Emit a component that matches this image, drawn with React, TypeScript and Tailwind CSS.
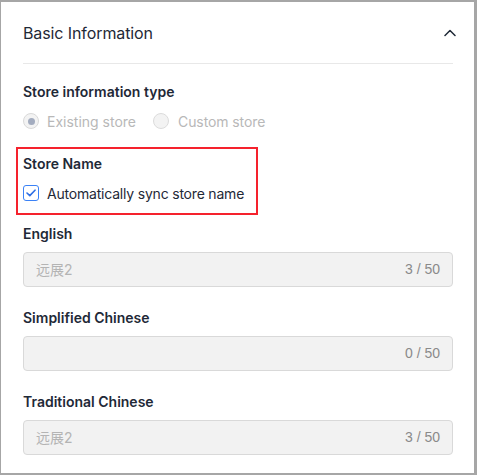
import React from "react";

function Field({ label, value, count }: { label: string; value: string; count: string }) {
  return (
    <div className="flex flex-col">
      <div className="h-5 flex items-center text-[14px] font-semibold text-[#1f2937] leading-5">{label}</div>
      <div className="mt-2 h-[35px] flex items-center justify-between rounded-[4px] border border-[#d9d9d9] bg-[#f2f2f2] pl-[12px] pr-[12px]">
        <span className="text-[14px] text-[#b4b4b4]" style={{ fontFamily: '"Inter", "Noto Sans CJK SC", sans-serif' }}>{value}</span>
        <span className="text-[14px] text-[#8a8a8a]" style={{ fontFamily: '"Liberation Sans", Arial, sans-serif' }}>{count}</span>
      </div>
    </div>
  );
}

export default function App() {
  return (
    <div
      className="w-[477px] h-[475px] bg-[#a6a6a6] pt-[2px] pl-[1px] pr-[3px] pb-[2px] flex"
      style={{ fontFamily: '"Inter", "Noto Sans CJK SC", sans-serif' }}
    >
      <div className="flex-1 bg-white pl-[22px] pr-[21px] flex flex-col">
        <div className="h-[61px] flex items-center justify-between">
          <span className="text-[16px] text-[#1f2937] tracking-[-0.1px]">Basic Information</span>
          <svg width="12" height="8" viewBox="0 0 12 8" className="mr-[-3px]" fill="none">
            <polyline points="1,6.5 6,1.5 11,6.5" stroke="#1f2937" strokeWidth="1.5" strokeLinecap="round" strokeLinejoin="round" />
          </svg>
        </div>
        <div className="h-px bg-[#e8e8e8]" />
        <div className="mt-[17px] h-5 flex items-center text-[14px] font-semibold text-[#1f2937]">Store information type</div>
        <div className="mt-[10px] h-5 flex items-center text-[14px] text-[#b8b8b8]">
          <span className="w-4 h-4 rounded-full border border-[#d9d9d9] bg-[#f3f3f3] flex items-center justify-center">
            <span className="w-[7px] h-[7px] rounded-full bg-[#a3acbf]" />
          </span>
          <span className="ml-2">Existing store</span>
          <span className="ml-[17px] w-4 h-4 rounded-full border border-[#dcdcdc] bg-[#f3f3f3]" />
          <span className="ml-[9px] tracking-[-0.1px]">Custom store</span>
        </div>
        <div className="relative mt-[22px]">
          <div className="absolute left-[-7px] top-[-6px] w-[242px] h-[68px] border-[2.5px] border-[#f5222d] pointer-events-none" />
          <div className="h-5 flex items-center text-[14px] font-semibold text-[#1f2937]">Store Name</div>
          <div className="mt-[10px] h-5 flex items-center text-[14px] text-[#1f2937]">
            <span className="w-4 h-4 rounded-[3px] border border-[#3b82f6] bg-white flex items-center justify-center">
              <svg width="10" height="8" viewBox="0 0 10 8" fill="none">
                <polyline points="1,4 3.8,6.6 9,1.2" stroke="#2f6fe4" strokeWidth="1.6" strokeLinecap="round" strokeLinejoin="round" />
              </svg>
            </span>
            <span className="ml-2 tracking-[-0.2px]">Automatically sync store name</span>
          </div>
        </div>
        <div className="mt-[21px] flex flex-col gap-[21px]">
          <Field label="English" value="远展2" count="3 / 50" />
          <Field label="Simplified Chinese" value="" count="0 / 50" />
          <Field label="Traditional Chinese" value="远展2" count="3 / 50" />
        </div>
      </div>
    </div>
  );
}
